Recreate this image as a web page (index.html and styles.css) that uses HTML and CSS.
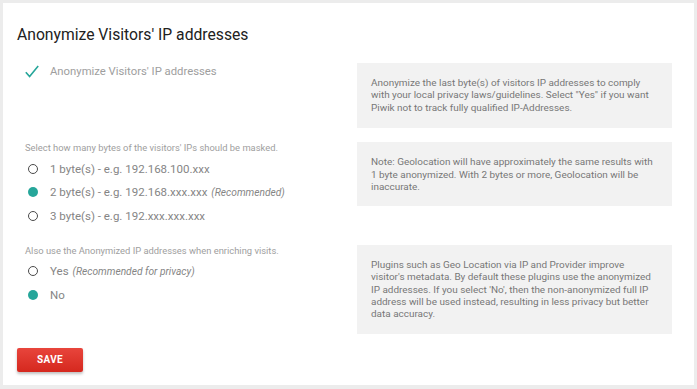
FILE: index.html
```html
<!DOCTYPE html>
<html lang="en">
<head>
  <meta charset="UTF-8">
  <title>Anonymize Visitors' IP addresses</title>
  <link rel="stylesheet" href="styles.css">
</head>
<body>
  <div class="card">
    <h2 class="card-title">Anonymize Visitors' IP addresses</h2>

    <div class="form-row first">
      <div class="field">
        <label class="check-item">
          <svg class="check" viewBox="0 0 14 13" width="14" height="13"><path d="M0.8 7.2 L4.6 11.6 L13.2 1" fill="none" stroke="#26a69a" stroke-width="1.6"/></svg>
          <span>Anonymize Visitors' IP addresses</span>
        </label>
      </div>
      <div class="help">Anonymize the last byte(s) of visitors IP addresses to comply<br>with your local privacy laws/guidelines. Select "Yes" if you want<br>Piwik not to track fully qualified IP-Addresses.</div>
    </div>

    <div class="form-row second">
      <div class="field">
        <div class="field-title">Select how many bytes of the visitors' IPs should be masked.</div>
        <label class="radio"><span class="dot"></span>1 byte(s) - e.g. 192.168.100.xxx</label>
        <label class="radio"><span class="dot on"></span>2 byte(s) - e.g. 192.168.xxx.xxx <em>(Recommended)</em></label>
        <label class="radio"><span class="dot"></span>3 byte(s) - e.g. 192.xxx.xxx.xxx</label>
      </div>
      <div class="help">Note: Geolocation will have approximately the same results with<br>1 byte anonymized. With 2 bytes or more, Geolocation will be<br>inaccurate.</div>
    </div>

    <div class="form-row third">
      <div class="field">
        <div class="field-title">Also use the Anonymized IP addresses when enriching visits.</div>
        <label class="radio"><span class="dot"></span>Yes <em>(Recommended for privacy)</em></label>
        <label class="radio"><span class="dot on"></span>No</label>
      </div>
      <div class="help">Plugins such as Geo Location via IP and Provider improve<br>visitor's metadata. By default these plugins use the anonymized<br>IP addresses. If you select 'No', then the non-anonymized full IP<br>address will be used instead, resulting in less privacy but better<br>data accuracy.</div>
    </div>

    <button class="btn">SAVE</button>
  </div>
</body>
</html>
```

FILE: styles.css
```css
body {
  margin: 3px;
  background: #ececec;
  font-family: 'Roboto', 'Liberation Sans', sans-serif;
}
.card {
  width: 691px;
  box-sizing: border-box;
  background: #fff;
  padding: 22px 22px 13px 14px;
  box-shadow: 0 1px 2px rgba(0,0,0,0.18);
}
.card-title {
  margin: 0;
  font-size: 15.7px;
  line-height: 20px;
  font-weight: 400;
  color: #212121;
}
.form-row {
  display: grid;
  grid-template-columns: 1fr 315px;
  column-gap: 26px;
  align-items: start;
}
.form-row.first {
  margin-top: 18px;
}
.form-row.second {
  margin-top: 14px;
}
.form-row.third {
  margin-top: 17px;
}
.field {
  padding-left: 8px;
}
.check-item {
  display: flex;
  align-items: center;
  height: 16px;
  font-size: 11.3px;
  color: #9e9e9e;
}
.check {
  margin-right: 11px;
}
.field-title {
  font-size: 9.4px;
  line-height: 12px;
  color: #9e9e9e;
  margin-bottom: 3px;
}
.radio {
  display: flex;
  align-items: center;
  height: 23.5px;
  font-size: 11.5px;
  color: #858585;
}
.radio em {
  font-size: 10.2px;
  margin-left: 4px;
}
.dot {
  width: 10px;
  height: 10px;
  box-sizing: border-box;
  border: 1.6px solid #4a4a4a;
  border-radius: 50%;
  margin: 0 12px 0 3px;
  flex-shrink: 0;
}
.dot.on {
  border: none;
  background: #26a69a;
}
.help {
  background: #f2f2f2;
  padding: 14px 2px 13px 14px;
  font-size: 9.95px;
  line-height: 12.4px;
  white-space: nowrap;
  color: #777;
}
.form-row.first .help {
  padding-bottom: 14px;
}
.btn {
  display: block;
  margin-top: 14px;
  width: 66px;
  height: 24px;
  border: none;
  border-radius: 2px;
  background: linear-gradient(#e8453c, #d5281e);
  color: #fff;
  font-family: 'Roboto', sans-serif;
  font-size: 10px;
  font-weight: 700;
  letter-spacing: 0.4px;
  box-shadow: 0 2px 3px rgba(0,0,0,0.25);
}
```
